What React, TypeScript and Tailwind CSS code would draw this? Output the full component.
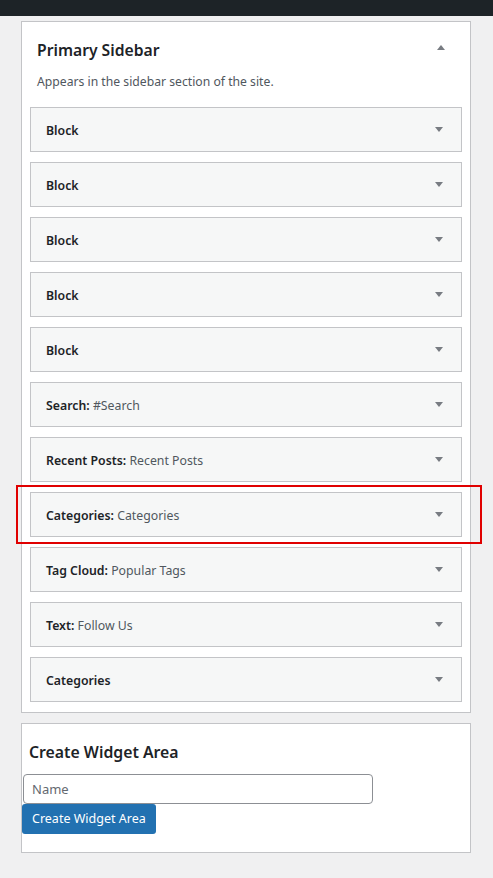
const font = { fontFamily: '"Noto Sans", "Open Sans", sans-serif' };

const widgets: { name: string; title?: string; marked?: boolean }[] = [
  { name: "Block" },
  { name: "Block" },
  { name: "Block" },
  { name: "Block" },
  { name: "Block" },
  { name: "Search", title: "#Search" },
  { name: "Recent Posts", title: "Recent Posts" },
  { name: "Categories", title: "Categories", marked: true },
  { name: "Tag Cloud", title: "Popular Tags" },
  { name: "Text", title: "Follow Us" },
  { name: "Categories" },
];

function Arrow({ up }: { up?: boolean }) {
  return (
    <svg width="10" height="6" viewBox="0 0 10 6" className="text-[#787c82]">
      {up ? <path d="M1 6 L5 1 L9 6 Z" fill="currentColor" /> : <path d="M1 0 L9 0 L5 5 Z" fill="currentColor" />}
    </svg>
  );
}

export default function App() {
  return (
    <div className="min-h-[878px] bg-[#f0f0f1] pb-6" style={font}>
      <div className="h-4 bg-[#1d2327]" />

      {/* Primary Sidebar */}
      <div className="mt-[5px] ml-[21px] w-[450px] border border-[#c3c4c7] bg-white">
        <div className="flex items-start justify-between pt-[16px] pl-[15px] pr-[24px]">
          <h2 className="text-[15.7px] font-semibold leading-6 text-[#1d2327]">Primary Sidebar</h2>
          <div className="pt-[6px]">
            <Arrow up />
          </div>
        </div>
        <p className="mt-[10px] mb-[15px] pl-[15px] text-[12.2px] leading-5 text-[#50575e]">
          Appears in the sidebar section of the site.
        </p>
        <div className="flex flex-col gap-[10px] px-2 pb-[10px]">
          {widgets.map((w, i) => (
            <div
              key={i}
              className="relative flex h-[45px] items-center justify-between border border-[#c3c4c7] bg-[#f6f7f7] pl-[15px] pr-[17px]"
            >
              <span className="mt-[2px] text-[12.3px] leading-5 text-[#1d2327]">
                <span className="font-semibold">
                  {w.name}
                  {w.title ? ":" : ""}
                </span>
                {w.title && <span className="text-[#50575e]"> {w.title}</span>}
              </span>
              <Arrow />
              {w.marked && (
                <div className="pointer-events-none absolute -top-[8px] -bottom-[8px] -left-[15px] -right-[21px] border-2 border-[#e00000]" />
              )}
            </div>
          ))}
        </div>
      </div>

      {/* Create Widget Area */}
      <div className="mt-[10px] ml-[21px] w-[450px] border border-[#c3c4c7] bg-white pt-[16px] pb-[18px]">
        <h3 className="pl-[7px] text-[15.8px] font-semibold leading-6 text-[#1d2327]">Create Widget Area</h3>
        <div className="mt-[10px] pl-px">
          <input
            type="text"
            placeholder="Name"
            className="block h-[30px] w-[350px] rounded-[4px] border border-[#8c8f94] bg-white px-2 text-[13px] text-[#1d2327] placeholder:text-[#646970] outline-none"
          />
          <button className="-ml-px block h-[30px] rounded-[3px] bg-[#2271b1] px-[10px] text-[12.5px] text-white">
            Create Widget Area
          </button>
        </div>
      </div>
    </div>
  );
}
